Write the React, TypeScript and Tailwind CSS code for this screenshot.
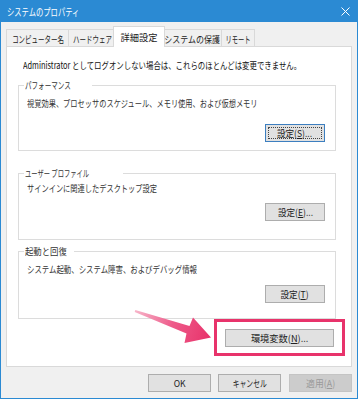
import React from "react";

const font = "font-['Noto_Sans_CJK_JP','Noto_Sans',sans-serif]";

// narrow text: the reference font has much narrower kana than Noto CJK
const Txt: React.FC<{ children: React.ReactNode; sx: string; center?: boolean }> = ({ children, sx, center }) => (
  <span className={`inline-block whitespace-nowrap ${center ? "origin-center" : "origin-left"} ${sx}`}>{children}</span>
);

interface BtnProps {
  label: string;
  keyChar: string;
  suffix?: string;
  width: string;
  sx: string;
  focused?: boolean;
  disabled?: boolean;
}

const WinButton: React.FC<BtnProps> = ({ label, keyChar, suffix = "", width, sx, focused, disabled }) => (
  <div
    className={`relative flex h-[18px] items-center justify-center overflow-hidden border text-[9.5px] leading-[14px] ${width} ${
      disabled
        ? "border-[#c4c4c4] bg-[#cccccc] text-[#9a9a9a]"
        : focused
        ? "border-[#3d7fc0] bg-[#e1e1e1] text-[#222]"
        : "border-[#adadad] bg-[#e1e1e1] text-[#222]"
    }`}
  >
    {focused && <span className="absolute inset-[2px] border border-dotted border-[#444]" />}
    <Txt sx={sx} center>
      {label}
      {keyChar && (
        <>
          (<span className="underline underline-offset-1">{keyChar}</span>)
        </>
      )}
      {suffix}
    </Txt>
  </div>
);

interface GroupProps {
  legend: string;
  legendSx: string;
  desc: string;
  descSx: string;
  mt: string;
  descMt: string;
  btnMt: string;
  height: string;
  button: React.ReactNode;
}

const Group: React.FC<GroupProps> = ({ legend, legendSx, desc, descSx, mt, descMt, btnMt, height, button }) => (
  <fieldset className={`w-[318px] min-w-0 border border-[#dcdcdc] pl-[8px] pr-[10px] ${mt} ${height}`}>
    <legend className="ml-[-3px] px-[1px] text-[9.5px] leading-[14px] text-[#333]">
      <Txt sx={legendSx}>{legend}</Txt>
    </legend>
    <p className={`overflow-hidden text-[9.5px] leading-[14px] text-[#333] ${descMt}`}>
      <Txt sx={descSx}>{desc}</Txt>
    </p>
    <div className={`flex justify-end ${btnMt}`}>{button}</div>
  </fieldset>
);

const tabs = [
  { name: "コンピューター名", w: "w-[62px]", sx: "scale-x-[0.68]" },
  { name: "ハードウェア", w: "w-[47px]", sx: "scale-x-[0.68]" },
  { name: "詳細設定", w: "w-[48px]", sx: "scale-x-[0.97]", active: true },
  { name: "システムの保護", w: "w-[58px]", sx: "scale-x-[0.84]" },
  { name: "リモート", w: "w-[34px]", sx: "scale-x-[0.66]" },
];

export default function App() {
  return (
    <div className={`relative h-[400px] w-[359px] overflow-hidden bg-white ${font}`}>
      <div className="flex h-[399px] w-[358px] flex-col border border-[#2b8ad3] bg-[#f0f0f0]">
        <div className="flex h-[21px] shrink-0 items-center justify-between bg-[#2b8ad3] pl-[6px] pr-[6px] text-white">
          <span className="text-[10px] leading-[14px]">
            <Txt sx="scale-x-[0.73]">システムのプロパティ</Txt>
          </span>
          <svg width="9" height="9" viewBox="0 0 9 9" className="mr-[1px]">
            <path d="M0.5 0.5L8.5 8.5M8.5 0.5L0.5 8.5" stroke="white" strokeWidth="1" />
          </svg>
        </div>

        <div className="flex flex-1 flex-col px-[5px] pt-[4px]">
          <div className="flex h-[21px] items-end">
            {tabs.map((t, i) =>
              t.active ? (
                <div
                  key={t.name}
                  className="relative z-10 -mx-[2px] flex h-[21px] w-[52px] items-center justify-center border-x border-t border-[#d9d9d9] bg-white pb-[1px] text-[9.5px] leading-[14px] text-[#222]"
                >
                  <Txt sx={t.sx} center>
                    {t.name}
                  </Txt>
                </div>
              ) : (
                <div
                  key={t.name}
                  className={`flex h-[18px] items-center justify-center overflow-hidden border-l border-t border-[#d9d9d9] bg-[#f0f0f0] text-[9.5px] leading-[14px] text-[#222] ${t.w} ${
                    i === tabs.length - 1 ? "border-r" : ""
                  }`}
                >
                  <Txt sx={t.sx} center>
                    {t.name}
                  </Txt>
                </div>
              )
            )}
          </div>

          <div className="-mt-px flex h-[321px] flex-col overflow-hidden border border-[#d9d9d9] bg-white px-[11px] pt-[11px]">
            <p className="overflow-hidden pl-[5px] text-[9.5px] leading-[14px] text-[#111]">
              <Txt sx="scale-x-[0.78]">Administrator としてログオンしない場合は、これらのほとんどは変更できません。</Txt>
            </p>

            <Group
              legend="パフォーマンス"
              legendSx="scale-x-[0.69]"
              desc="視覚効果、プロセッサのスケジュール、メモリ使用、および仮想メモリ"
              descSx="scale-x-[0.76]"
              mt="mt-[6px]"
              descMt="mt-[4px]"
              btnMt="mt-[14px]"
              height="h-[73px]"
              button={<WinButton label="設定" keyChar="S" suffix="..." width="w-[60px]" sx="scale-x-[0.9]" focused />}
            />
            <Group
              legend="ユーザー プロファイル"
              legendSx="scale-x-[0.66]"
              desc="サインインに関連したデスクトップ設定"
              descSx="scale-x-[0.76]"
              mt="mt-[15px]"
              descMt="mt-[1px]"
              btnMt="mt-[8px]"
              height="h-[74px]"
              button={<WinButton label="設定" keyChar="E" suffix="..." width="w-[60px]" sx="scale-x-[0.9]" />}
            />
            <Group
              legend="起動と回復"
              legendSx="scale-x-[0.88]"
              desc="システム起動、システム障害、およびデバッグ情報"
              descSx="scale-x-[0.78]"
              mt="mt-[4px]"
              descMt="mt-[4px]"
              btnMt="mt-[9px]"
              height="h-[75px]"
              button={<WinButton label="設定" keyChar="T" width="w-[60px]" sx="scale-x-[0.9]" />}
            />

            <div className="mt-[10px] flex w-[318px] justify-end pr-[2px]">
              <WinButton label="環境変数" keyChar="N" suffix="..." width="w-[109px]" sx="scale-x-[0.97]" />
            </div>
          </div>

          <div className="mt-[7px] flex justify-end gap-[7px]">
            <WinButton label="OK" keyChar="" width="w-[63px]" sx="scale-x-[0.9]" />
            <WinButton label="キャンセル" keyChar="" width="w-[63px]" sx="scale-x-[0.72]" />
            <WinButton label="適用" keyChar="A" width="w-[63px] ml-[1px]" sx="scale-x-[0.93]" disabled />
          </div>
        </div>
      </div>

      <svg className="pointer-events-none absolute inset-0" width="359" height="400" viewBox="0 0 359 400">
        <defs>
          <linearGradient id="arrowGrad" x1="135" y1="311" x2="210" y2="337" gradientUnits="userSpaceOnUse">
            <stop offset="0" stopColor="#f7b5c9" />
            <stop offset="0.5" stopColor="#ee5b8a" />
            <stop offset="1" stopColor="#e8336b" />
          </linearGradient>
        </defs>
        <polygon
          points="135.3,310 189.5,326 193,317.5 211,337.5 184.5,343 186.5,333.5 134.7,312"
          fill="url(#arrowGrad)"
        />
        <rect x="215.5" y="320.5" width="128" height="34" fill="none" stroke="#e8336b" strokeWidth="3" />
      </svg>
    </div>
  );
}
